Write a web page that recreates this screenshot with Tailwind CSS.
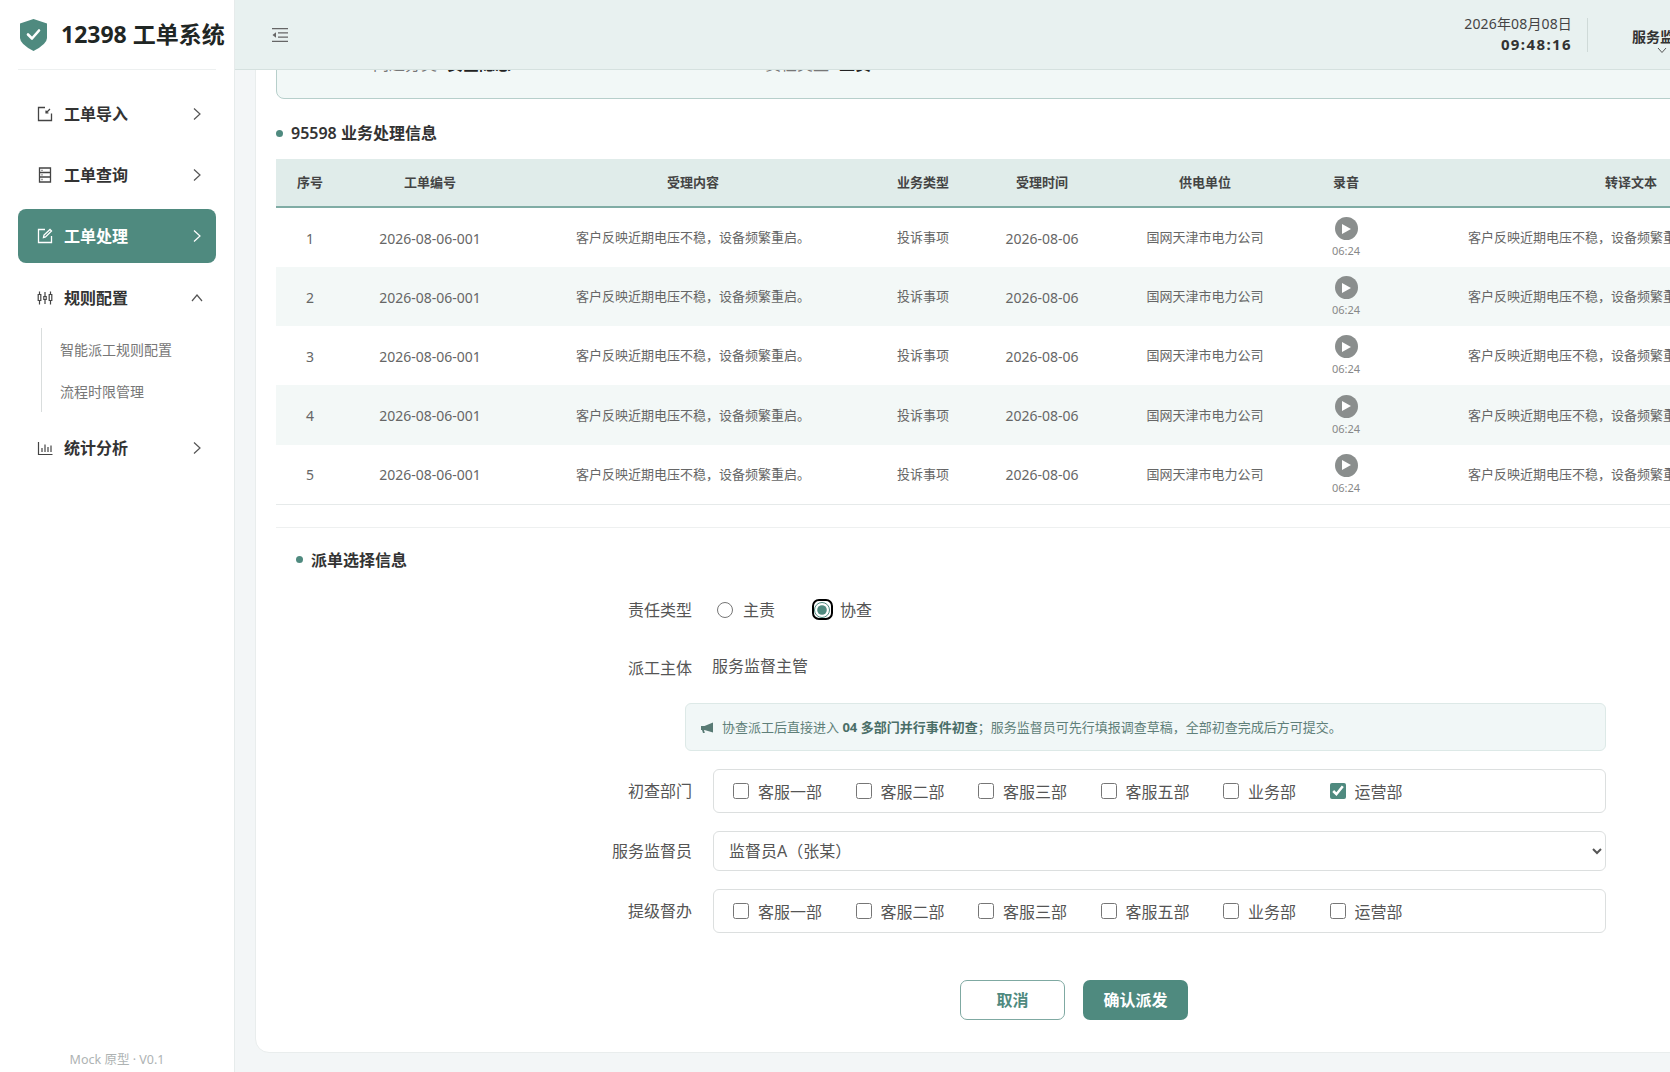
<!DOCTYPE html>
<html lang="zh-CN">
<head>
  <meta charset="UTF-8" />
  <meta name="viewport" content="width=device-width, initial-scale=1.0"/>
  <title>12398 工单系统</title>
  <script src="https://cdn.jsdelivr.net/npm/@tailwindcss/browser@4"></script>
</head>
<body class="h-screen overflow-hidden flex bg-[#f3f6f7] text-[#333] font-['Noto_Sans','Noto_Sans_CJK_SC',sans-serif]">

  <!-- sidebar -->
  <aside class="w-[235px] shrink-0 h-full bg-white border-r border-[#e6ebeb] flex flex-col px-[18px]">
    <div class="h-[70px] shrink-0 flex items-center border-b border-[#edf0f0] gap-[14px] pl-[2px]">
      <svg class="w-[27px] h-[32px] shrink-0" viewBox="0 0 27 32">
        <path d="M13.5 0 27 4.500V19q0 6-13.500 13Q0 25 0 19V4.500z" fill="#4f8a7f"/>
        <path d="M8 15.500l4 4 7-8" fill="none" stroke="#fff" stroke-width="2.600" stroke-linecap="round" stroke-linejoin="round"/>
      </svg>
      <span class="text-[23px] leading-none font-bold text-[#1f2624] whitespace-nowrap">12398 工单系统</span>
    </div>

    <nav class="mt-[17px] flex flex-col">
      <a class="h-[54px] rounded-lg flex items-center pl-[19px] pr-[14px] text-[16px] font-semibold text-[#333]">
        <svg class="w-4 h-4 mr-[11px]" viewBox="0 0 16 16" fill="none" stroke="#444" stroke-width="1.300"><path d="M8 1.500H1.500v13h13V7.500"/><path d="m9 7 4-4M9 4.500V7h2.500" stroke-width="1.200"/></svg>
        <span class="flex-1">工单导入</span>
        <svg class="w-[10px] h-[14px]" viewBox="0 0 10 14" fill="none" stroke="#555" stroke-width="1.200"><path d="m2 1.500 6 5.500-6 5.500"/></svg>
      </a>
      <a class="mt-[7px] h-[54px] rounded-lg flex items-center pl-[19px] pr-[14px] text-[16px] font-semibold text-[#333]">
        <svg class="w-4 h-4 mr-[11px]" viewBox="0 0 16 16" fill="none" stroke="#444" stroke-width="1.300"><path d="M2.500 1h11v14h-11zM2.500 5.500h11M2.500 10h11"/><path d="M4.500 3.300h1M4.500 7.800h1M4.500 12.500h1"/></svg>
        <span class="flex-1">工单查询</span>
        <svg class="w-[10px] h-[14px]" viewBox="0 0 10 14" fill="none" stroke="#555" stroke-width="1.200"><path d="m2 1.500 6 5.500-6 5.500"/></svg>
      </a>
      <a class="mt-[7px] h-[54px] rounded-lg flex items-center pl-[19px] pr-[14px] text-[16px] font-semibold text-white bg-[#4f8a7f]">
        <svg class="w-4 h-4 mr-[11px]" viewBox="0 0 16 16" fill="none" stroke="#fff" stroke-width="1.300"><path d="M8 1.500H1.500v13h13V8"/><path d="M6.500 9.500 7 7l6-5.500 1.500 1.500-6 6z"/></svg>
        <span class="flex-1">工单处理</span>
        <svg class="w-[10px] h-[14px]" viewBox="0 0 10 14" fill="none" stroke="#fff" stroke-width="1.200"><path d="m2 1.500 6 5.500-6 5.500"/></svg>
      </a>
      <a class="mt-[8px] h-[54px] rounded-lg flex items-center pl-[19px] pr-[14px] text-[16px] font-semibold text-[#333]">
        <svg class="w-4 h-4 mr-[11px]" viewBox="0 0 16 16" fill="none" stroke="#444" stroke-width="1.200"><path d="M2.500 1.500v13M8 2v12M13.500 1.500v13"/><path d="M1.200 4.500h2.600v6H1.200zM6.800 6.500h2.400v3H6.800zM12.200 4.500h2.600v6h-2.600z" fill="#fff"/></svg>
        <span class="flex-1">规则配置</span>
        <svg class="w-[12px] h-[10px] -mr-[1px]" viewBox="0 0 12 10" fill="none" stroke="#555" stroke-width="1.200"><path d="m1 8 5-6 5 6"/></svg>
      </a>
      <div class="ml-[23px] mt-[3px] border-l border-[#d9dddd] pl-[18px] h-[84px] flex flex-col text-[14px] text-[#777]">
        <a class="h-[42px] flex items-center whitespace-nowrap">智能派工规则配置</a>
        <a class="h-[42px] flex items-center whitespace-nowrap">流程时限管理</a>
      </div>
      <a class="mt-[9px] h-[54px] rounded-lg flex items-center pl-[19px] pr-[14px] text-[16px] font-semibold text-[#333]">
        <svg class="w-4 h-4 mr-[11px]" viewBox="0 0 16 16" fill="none" stroke="#444" stroke-width="1.200"><path d="M1.500 2v12.500h14"/><path d="M5 12V8M8 12V4.500M11 12V7M14 12V5.500"/></svg>
        <span class="flex-1">统计分析</span>
        <svg class="w-[10px] h-[14px]" viewBox="0 0 10 14" fill="none" stroke="#555" stroke-width="1.200"><path d="m2 1.500 6 5.500-6 5.500"/></svg>
      </a>
    </nav>

    <div class="mt-auto pb-[3px] text-center text-[12.500px] leading-[18px] text-[#aeb3b3]">Mock 原型 · V0.1</div>
  </aside>

  <div class="flex-1 min-w-0 flex flex-col h-full">
    <!-- top bar -->
    <header class="relative z-10 h-[70px] shrink-0 bg-[#e8f1f0] border-b border-[#d5e1df] flex items-center justify-between pl-[36px]">
      <svg class="w-[18px] h-[14px] text-[#666]" viewBox="0 0 18 14" fill="none" stroke="currentColor" stroke-width="1.200"><path d="M1 .600h16M7 4.800h10M7 9.200h10M1 13.400h16"/><path d="M5 4.300v5.400L1.500 7z" fill="currentColor" stroke="none"/></svg>
      <div class="flex items-center -mr-[46px]">
        <div class="text-right -mt-[2px]">
          <div class="text-[14px] leading-[20px] tracking-[.15px] text-[#444] whitespace-nowrap">2026年08月08日</div>
          <div class="text-[15px] leading-[20px] font-bold tracking-[1.400px] text-[#333]">09:48:16</div>
        </div>
        <div class="w-px h-[34px] bg-[#cfdad8] ml-[15px] mr-[44px]"></div>
        <div class="w-[84px] pt-[13px]">
          <div class="text-[14px] leading-[18px] font-semibold text-[#333] whitespace-nowrap">服务监督主管</div>
          <svg class="ml-[25px] mt-[1px] w-[10px] h-[7px]" viewBox="0 0 10 7" fill="none" stroke="#555"><path d="m1 1 4 4.500L9 1"/></svg>
        </div>
      </div>
    </header>

    <!-- scrolled content -->
    <main class="flex-1 min-h-0 overflow-hidden pl-[20px]">
      <div class="w-[1640px] -mt-[40px] pt-[8px] px-[20px] pb-[32px] bg-white rounded-[14px] border border-[#e9eded]">
        <div class="h-[60px] bg-[#f2f8f7] border border-[#b7cfcb] rounded-lg pt-[13px] pl-[96px] flex text-[16px] leading-[22px]">
          <span class="text-[#777]">问题分类</span>
          <span class="ml-[10px] font-semibold text-[#222]">安全隐患</span>
          <span class="ml-[254px] text-[#777]">责任类型</span>
          <span class="ml-[10px] font-semibold text-[#222]">主责</span>
        </div>

        <h3 class="mt-[21px] h-[28px] pb-[2px] flex items-center gap-[8px] text-[16px] font-semibold text-[#333]">
          <span class="w-[7px] h-[7px] rounded-full bg-[#4f8a7f]"></span>95598 业务处理信息
        </h3>

        <table class="mt-[11px] w-[1596px] table-fixed border-collapse text-center [&_th]:text-[13px] [&_th]:font-semibold [&_th]:text-[#444] [&_td]:pt-[1px] [&_td]:text-[13px] [&_td]:text-[#666] [&_td]:whitespace-nowrap">
          <colgroup>
            <col class="w-[68px]"/><col class="w-[172px]"/><col class="w-[354px]"/><col class="w-[106px]"/><col class="w-[132px]"/><col class="w-[194px]"/><col class="w-[88px]"/><col class="w-[482px]"/>
          </colgroup>
          <thead>
            <tr class="h-[48px] bg-[#e0ecea] border-b-2 border-[#80aca5]">
              <th>序号</th><th>工单编号</th><th>受理内容</th><th>业务类型</th><th>受理时间</th><th>供电单位</th><th>录音</th><th>转译文本</th>
            </tr>
          </thead>
          <tbody>
            <tr class="h-[60px]">
              <td class="!text-[14px]">1</td><td class="!text-[14px]">2026-08-06-001</td><td>客户反映近期电压不稳&#65292;设备频繁重启。</td><td>投诉事项</td><td class="!text-[14px]">2026-08-06</td><td>国网天津市电力公司</td>
              <td class="!pt-0"><div class="flex flex-col items-center gap-[3px]"><span class="w-[23px] h-[23px] rounded-full bg-[#8a8e8d] flex items-center justify-center"><svg class="w-[9px] h-[10px] ml-[1px]" viewBox="0 0 9 10"><path d="M0 0l9 5-9 5z" fill="#fff"/></svg></span><span class="text-[11px] leading-[15px] text-[#888]">06:24</span></div></td>
              <td class="pl-[78px] !text-left">客户反映近期电压不稳&#65292;设备频繁重启。</td>
            </tr>
            <tr class="h-[59px] bg-[#f3f8f7]">
              <td class="!text-[14px]">2</td><td class="!text-[14px]">2026-08-06-001</td><td>客户反映近期电压不稳&#65292;设备频繁重启。</td><td>投诉事项</td><td class="!text-[14px]">2026-08-06</td><td>国网天津市电力公司</td>
              <td class="!pt-0"><div class="flex flex-col items-center gap-[3px]"><span class="w-[23px] h-[23px] rounded-full bg-[#8a8e8d] flex items-center justify-center"><svg class="w-[9px] h-[10px] ml-[1px]" viewBox="0 0 9 10"><path d="M0 0l9 5-9 5z" fill="#fff"/></svg></span><span class="text-[11px] leading-[15px] text-[#888]">06:24</span></div></td>
              <td class="pl-[78px] !text-left">客户反映近期电压不稳&#65292;设备频繁重启。</td>
            </tr>
            <tr class="h-[59px]">
              <td class="!text-[14px]">3</td><td class="!text-[14px]">2026-08-06-001</td><td>客户反映近期电压不稳&#65292;设备频繁重启。</td><td>投诉事项</td><td class="!text-[14px]">2026-08-06</td><td>国网天津市电力公司</td>
              <td class="!pt-0"><div class="flex flex-col items-center gap-[3px]"><span class="w-[23px] h-[23px] rounded-full bg-[#8a8e8d] flex items-center justify-center"><svg class="w-[9px] h-[10px] ml-[1px]" viewBox="0 0 9 10"><path d="M0 0l9 5-9 5z" fill="#fff"/></svg></span><span class="text-[11px] leading-[15px] text-[#888]">06:24</span></div></td>
              <td class="pl-[78px] !text-left">客户反映近期电压不稳&#65292;设备频繁重启。</td>
            </tr>
            <tr class="h-[60px] bg-[#f3f8f7]">
              <td class="!text-[14px]">4</td><td class="!text-[14px]">2026-08-06-001</td><td>客户反映近期电压不稳&#65292;设备频繁重启。</td><td>投诉事项</td><td class="!text-[14px]">2026-08-06</td><td>国网天津市电力公司</td>
              <td class="!pt-0"><div class="flex flex-col items-center gap-[3px]"><span class="w-[23px] h-[23px] rounded-full bg-[#8a8e8d] flex items-center justify-center"><svg class="w-[9px] h-[10px] ml-[1px]" viewBox="0 0 9 10"><path d="M0 0l9 5-9 5z" fill="#fff"/></svg></span><span class="text-[11px] leading-[15px] text-[#888]">06:24</span></div></td>
              <td class="pl-[78px] !text-left">客户反映近期电压不稳&#65292;设备频繁重启。</td>
            </tr>
            <tr class="h-[59px] border-b border-[#e6eaea]">
              <td class="!text-[14px]">5</td><td class="!text-[14px]">2026-08-06-001</td><td>客户反映近期电压不稳&#65292;设备频繁重启。</td><td>投诉事项</td><td class="!text-[14px]">2026-08-06</td><td>国网天津市电力公司</td>
              <td class="!pt-0"><div class="flex flex-col items-center gap-[3px]"><span class="w-[23px] h-[23px] rounded-full bg-[#8a8e8d] flex items-center justify-center"><svg class="w-[9px] h-[10px] ml-[1px]" viewBox="0 0 9 10"><path d="M0 0l9 5-9 5z" fill="#fff"/></svg></span><span class="text-[11px] leading-[15px] text-[#888]">06:24</span></div></td>
              <td class="pl-[78px] !text-left">客户反映近期电压不稳&#65292;设备频繁重启。</td>
            </tr>
          </tbody>
        </table>

        <div class="mt-[22px] border-t border-[#eef0f0]"></div>

        <h3 class="mt-[19px] h-[28px] pb-[2px] ml-[20px] flex items-center gap-[8px] text-[16px] font-semibold text-[#333]">
          <span class="w-[7px] h-[7px] rounded-full bg-[#4f8a7f]"></span>派单选择信息
        </h3>

        <!-- dispatch form -->
        <form class="ml-[264px] w-[1066px] mt-[15px] text-[16px] text-[#555]">
          <div class="h-[40px] flex items-center">
            <label class="w-[152px] text-right">责任类型</label>
            <div class="ml-[25px] flex items-center">
              <input type="radio" name="duty" class="w-4 h-4 m-0 accent-[#4f8a7f]"/>
              <span class="ml-[10px]">主责</span>
              <span class="ml-[36.500px] w-[21px] h-[21px] border-2 border-black rounded-[7px] flex items-center justify-center">
                <input type="radio" name="duty" checked class="w-4 h-4 m-0 accent-[#4f8a7f]"/>
              </span>
              <span class="ml-[7.500px]">协查</span>
            </div>
          </div>
          <div class="mt-[18px] h-[40px] flex items-center">
            <label class="w-[152px] text-right">派工主体</label>
            <span class="ml-[20px] pb-[4px]">服务监督主管</span>
          </div>
          <div class="mt-[15px] ml-[145px] h-[48px] bg-[#f1f7f7] border border-[#dde9e7] rounded-md pl-[15px] pt-[3px] flex items-center text-[13px] text-[#5f7f79]">
            <svg class="w-[13px] h-[12px] mr-[8px] shrink-0" viewBox="0 0 13 12"><path d="M0 4h3.500L12 .500v10L3.500 8H3l.8 3H2L1 8H0z" fill="#587a74"/></svg>
            <span>协查派工后直接进入 <b class="font-bold text-[#4a6e67]">04 多部门并行事件初查</b>&#65307;服务监督员可先行填报调查草稿&#65292;全部初查完成后方可提交。</span>
          </div>
          <div class="mt-[18px] h-[44px] flex items-center">
            <label class="w-[152px] text-right">初查部门</label>
            <div class="ml-[21px] flex-1 h-full border border-[#dcdfdf] rounded-md pl-[19px] flex items-center gap-[33.5px]">
              <label class="flex items-center gap-[9px]"><input type="checkbox" class="w-4 h-4 m-0 accent-[#4f8a7f]"/><span class="pt-[2px]">客服一部</span></label>
              <label class="flex items-center gap-[9px]"><input type="checkbox" class="w-4 h-4 m-0 accent-[#4f8a7f]"/><span class="pt-[2px]">客服二部</span></label>
              <label class="flex items-center gap-[9px]"><input type="checkbox" class="w-4 h-4 m-0 accent-[#4f8a7f]"/><span class="pt-[2px]">客服三部</span></label>
              <label class="flex items-center gap-[9px]"><input type="checkbox" class="w-4 h-4 m-0 accent-[#4f8a7f]"/><span class="pt-[2px]">客服五部</span></label>
              <label class="flex items-center gap-[9px]"><input type="checkbox" class="w-4 h-4 m-0 accent-[#4f8a7f]"/><span class="pt-[2px]">业务部</span></label>
              <label class="flex items-center gap-[9px]"><input type="checkbox" checked class="w-4 h-4 m-0 accent-[#4f8a7f]"/><span class="pt-[2px]">运营部</span></label>
            </div>
          </div>
          <div class="mt-[18px] h-[40px] flex items-center">
            <label class="w-[152px] text-right">服务监督员</label>
            <select class="ml-[21px] flex-1 h-full border border-[#dcdfdf] rounded-md pl-[11px] pr-[3px] pt-[1px] bg-white text-[#555]">
              <option>监督员A&#65288;张某&#65289;</option>
            </select>
          </div>
          <div class="mt-[18px] h-[44px] flex items-center">
            <label class="w-[152px] text-right">提级督办</label>
            <div class="ml-[21px] flex-1 h-full border border-[#dcdfdf] rounded-md pl-[19px] flex items-center gap-[33.5px]">
              <label class="flex items-center gap-[9px]"><input type="checkbox" class="w-4 h-4 m-0 accent-[#4f8a7f]"/><span class="pt-[2px]">客服一部</span></label>
              <label class="flex items-center gap-[9px]"><input type="checkbox" class="w-4 h-4 m-0 accent-[#4f8a7f]"/><span class="pt-[2px]">客服二部</span></label>
              <label class="flex items-center gap-[9px]"><input type="checkbox" class="w-4 h-4 m-0 accent-[#4f8a7f]"/><span class="pt-[2px]">客服三部</span></label>
              <label class="flex items-center gap-[9px]"><input type="checkbox" class="w-4 h-4 m-0 accent-[#4f8a7f]"/><span class="pt-[2px]">客服五部</span></label>
              <label class="flex items-center gap-[9px]"><input type="checkbox" class="w-4 h-4 m-0 accent-[#4f8a7f]"/><span class="pt-[2px]">业务部</span></label>
              <label class="flex items-center gap-[9px]"><input type="checkbox" class="w-4 h-4 m-0 accent-[#4f8a7f]"/><span class="pt-[2px]">运营部</span></label>
            </div>
          </div>
          <div class="mt-[47px] pl-[2px] flex justify-center gap-[18px]">
            <button type="button" class="w-[105px] h-[40px] rounded-[7px] border border-[#7fa9a2] bg-white text-[#4f8a7f] font-bold">取消</button>
            <button type="button" class="w-[105px] h-[40px] rounded-[7px] bg-[#4f8a7f] text-white font-bold">确认派发</button>
          </div>
        </form>
      </div>
    </main>
  </div>
</body>
</html>
